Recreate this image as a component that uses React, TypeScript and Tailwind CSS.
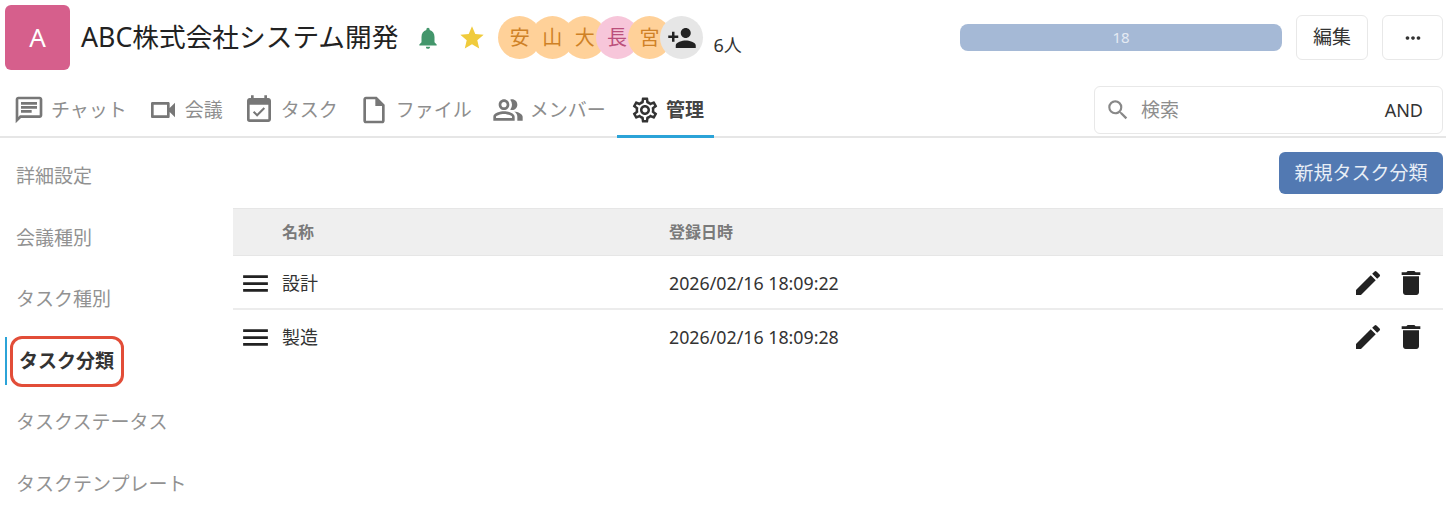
import {
  MdDelete,
  MdEdit,
  MdEventAvailable,
  MdMenu,
  MdMoreHoriz,
  MdNotifications,
  MdOutlineChat,
  MdOutlineInsertDriveFile,
  MdOutlinePeopleAlt,
  MdOutlineSettings,
  MdOutlineVideocam,
  MdPersonAdd,
  MdSearch,
  MdStar,
} from "react-icons/md";
import type { IconType } from "react-icons";

const FONT = "[font-family:'Noto_Sans','Noto_Sans_CJK_JP',sans-serif]";

const MEMBERS = [
  { name: "安", pink: false },
  { name: "山", pink: false },
  { name: "大", pink: false },
  { name: "長", pink: true },
  { name: "宮", pink: false },
];

const TABS: { label: string; icon: IconType; active?: boolean }[] = [
  { label: "チャット", icon: MdOutlineChat },
  { label: "会議", icon: MdOutlineVideocam },
  { label: "タスク", icon: MdEventAvailable },
  { label: "ファイル", icon: MdOutlineInsertDriveFile },
  { label: "メンバー", icon: MdOutlinePeopleAlt },
  { label: "管理", icon: MdOutlineSettings, active: true },
];

const MENU = [
  "詳細設定",
  "会議種別",
  "タスク種別",
  "タスク分類",
  "タスクステータス",
  "タスクテンプレート",
];

const ROWS = [
  { name: "設計", date: "2026/02/16 18:09:22" },
  { name: "製造", date: "2026/02/16 18:09:28" },
];

function Header() {
  return (
    <div className="flex h-[75px] items-center pl-[5px] pr-[3px]">
      <div className="flex h-[65px] w-[65px] items-center justify-center rounded-md bg-[#d65f8c] text-[26px] text-white">
        A
      </div>
      <h1 className="ml-[11px] text-[26.7px] leading-none text-[#222]">ABC株式会社システム開発</h1>
      <MdNotifications className="ml-[17px] text-[#43966b]" size={26} />
      <MdStar className="ml-[17px] text-[#f0cb3c]" size={28} />
      <div className="ml-[12px] flex">
        {MEMBERS.map((m) => (
          <div
            key={m.name}
            className={`-mr-[10.6px] flex h-[43px] w-[43px] items-center justify-center rounded-full text-[20px] ${
              m.pink ? "bg-[#f7c6da] text-[#bb4f7b]" : "bg-[#ffd199] text-[#cf8126]"
            }`}
          >
            {m.name}
          </div>
        ))}
        <div className="flex h-[43px] w-[43px] items-center justify-center rounded-full bg-[#e6e6e6] text-[#222]">
          <MdPersonAdd size={30} />
        </div>
      </div>
      <span className="ml-[10px] mt-[15px] text-[18px] text-[#333]">6人</span>
      <div className="ml-auto flex items-center">
        <div className="flex h-[27px] w-[322px] items-center justify-center rounded-lg bg-[#a5b9d6] text-[15px] text-[#e4eaf3]">
          18
        </div>
        <button className="ml-[14px] h-[45px] w-[72px] rounded-md border border-[#e8e8e8] text-[19px] text-[#333]">
          編集
        </button>
        <button className="ml-[14px] flex h-[45px] w-[61px] items-center justify-center rounded-md border border-[#e8e8e8] text-[#333]">
          <MdMoreHoriz size={22} />
        </button>
      </div>
    </div>
  );
}

function Tabs() {
  return (
    <div className="flex h-[63px] items-end border-b-2 border-[#e6e6e6] pl-[3px] pr-[3px]">
      <div className="flex h-[62px] items-stretch">
        {TABS.map((t) => {
          const Icon = t.icon;
          return (
            <div
              key={t.label}
              className={`-mb-[2px] flex items-center gap-[6px] border-b-[3px] pt-[11px] text-[19px] ${
                t.active
                  ? "ml-[1px] border-[#2ba3d8] pl-[13px] pr-[10px] font-bold text-[#444]"
                  : "border-transparent px-[10px] text-[#8e8e8e]"
              }`}
            >
              <Icon size={t.active ? 30 : 32} className={t.active ? "text-[#333]" : "text-[#777]"} />
              <span>{t.label}</span>
            </div>
          );
        })}
      </div>
      <div className="ml-auto mb-[2px] flex h-[48px] w-[349px] items-center rounded-md border border-[#e8e8e8] pl-[10px] pr-[19px]">
        <MdSearch size={26} className="text-[#888]" />
        <span className="ml-[10px] text-[19px] text-[#8e8e8e]">検索</span>
        <span className="ml-auto text-[18px] text-[#333]">AND</span>
      </div>
    </div>
  );
}

function SideMenu() {
  return (
    <nav className="w-[233px] shrink-0 pl-[5px] pt-[7.5px]">
      {MENU.map((item, i) => {
        const active = i === 3;
        return (
          <div
            key={item}
            className={`relative flex h-[61.6px] items-center text-[19px] ${
              active ? "pl-[14px] font-bold text-[#333]" : "pl-[11px] text-[#929292]"
            }`}
          >
            {item}
            {active && (
              <>
                <div className="absolute left-0 top-[7px] h-[48px] w-[2px] bg-[#2ba3d8]" />
                <div className="absolute left-[5px] top-[6px] h-[51px] w-[114px] rounded-[12px] border-[3px] border-[#e24d38]" />
              </>
            )}
          </div>
        );
      })}
    </nav>
  );
}

function TaskTable() {
  return (
    <div className="flex-1 pr-[3px] pt-[14px]">
      <div className="flex justify-end">
        <button className="h-[42px] w-[164px] rounded-md bg-[#5279b2] text-[19px] text-[#e8eef6]">
          新規タスク分類
        </button>
      </div>
      <div className="mt-[14px] flex h-[48px] items-center border-y border-[#e6e6e6] bg-[#efefef] text-[16px] font-bold text-[#7a7a7a]">
        <span className="ml-[49px] w-[387px]">名称</span>
        <span>登録日時</span>
      </div>
      {ROWS.map((r, i) => (
        <div
          key={r.name}
          className={`flex h-[54px] items-center text-[18px] text-[#333] ${i === 0 ? "border-b-2 border-[#ececec] pt-[2px]" : ""}`}
        >
          <MdMenu size={33} className="ml-[6px] text-[#222]" />
          <span className="ml-[10px] w-[387px]">{r.name}</span>
          <span className="text-[17.8px]">{r.date}</span>
          <div className="ml-auto mr-[16px] flex items-center gap-[11px] text-[#222]">
            <MdEdit size={32} />
            <MdDelete size={32} />
          </div>
        </div>
      ))}
    </div>
  );
}

export default function App() {
  return (
    <div className={`h-[522px] w-[1446px] overflow-hidden bg-white ${FONT}`}>
      <Header />
      <Tabs />
      <div className="flex">
        <SideMenu />
        <TaskTable />
      </div>
    </div>
  );
}
